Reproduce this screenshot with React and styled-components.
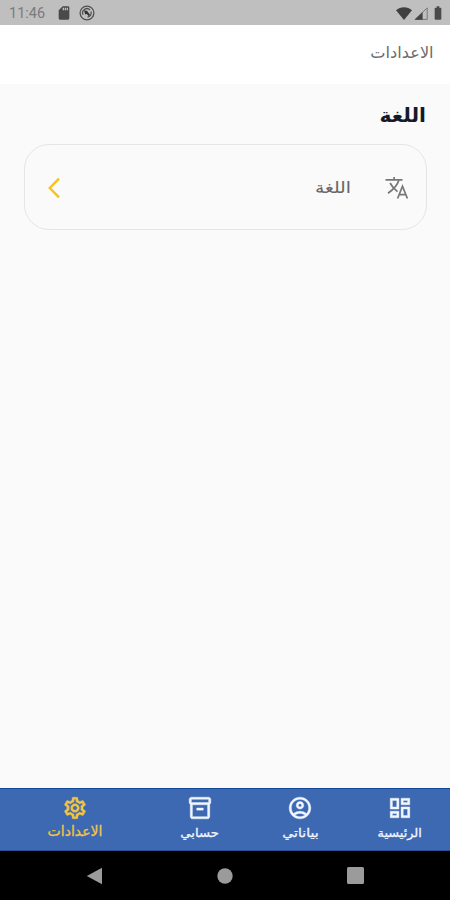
import styled, { createGlobalStyle } from "styled-components";
import {
  MdBatteryFull,
  MdOutlineAccountCircle,
  MdOutlineDashboard,
  MdOutlineInventory2,
  MdOutlineSettings,
  MdSdCard,
} from "react-icons/md";

const GlobalStyle = createGlobalStyle`
  * {
    box-sizing: border-box;
  }

  body {
    margin: 0;
    background: #fafafa;
    font-family: "DejaVu Sans", sans-serif;
  }
`;

const Screen = styled.div`
  display: flex;
  flex-direction: column;
  width: 450px;
  height: 900px;
  overflow: hidden;
  background: #fafafa;
`;

const StatusBar = styled.div`
  display: flex;
  align-items: center;
  flex: none;
  height: 25px;
  padding: 1px 4px 0 9px;
  background: #bfbfbf;
  color: #4a4a4a;
`;

const Clock = styled.span`
  width: 47px;
  padding-top: 2px;
  color: #7b7b7b;
  font-family: Roboto, sans-serif;
  font-size: 14.5px;
  line-height: 22px;
`;

const StatusIcons = styled.div`
  display: flex;
  align-items: center;
  gap: ${(props) => props.$gap};
  margin-left: ${(props) => (props.$end ? "auto" : 0)};
`;

const Header = styled.header`
  display: flex;
  flex: none;
  height: 59px;
  padding: 16px 16px 0;
  background: #fff;
`;

const Label = styled.span`
  display: block;
  color: ${(props) => props.$color};
  font-size: ${(props) => props.$size}px;
  font-weight: ${(props) => props.$weight || 400};
  line-height: 24px;
  white-space: nowrap;
  transform: scaleX(${(props) => props.$stretch || 1});
  transform-origin: ${(props) => props.$origin || "right"};
  -webkit-text-stroke: ${(props) => props.$stroke || 0}px currentColor;
`;

const Content = styled.main`
  flex: 1;
  padding: 19px 23px 0 24px;
`;

const SectionTitle = styled.h2`
  display: flex;
  height: 24px;
  margin: 0 1px 17px;
`;

const Card = styled.div`
  display: flex;
  align-items: center;
  height: 86px;
  padding: 2px 17px 0 22px;
  border: 1px solid #e5e5e5;
  border-radius: 25px;
`;

const CardText = styled.div`
  display: flex;
  flex: 1;
  margin-right: 34px;
`;

const BottomNav = styled.nav`
  display: flex;
  flex: none;
  height: 63px;
  border-top: 1px solid #12479c;
  border-bottom: 1px solid #2c5292;
  background: #3d68b2;
`;

const NavItem = styled.div`
  display: flex;
  flex-direction: column;
  align-items: center;
  width: ${(props) => (props.$active ? 150 : 100)}px;
  padding-top: 6px;
  color: ${(props) => (props.$active ? "#f0c544" : "#f2f6fd")};

  > svg {
    flex: none;
    margin-bottom: ${(props) => (props.$active ? -2 : 0)}px;
  }

  /* the first path of each icon is an empty bounding box */
  > svg path:not([fill="none"]) {
    stroke: currentColor;
    stroke-width: 0.4px;
  }
`;

const SystemBar = styled.div`
  display: flex;
  align-items: center;
  justify-content: space-between;
  flex: none;
  height: 49px;
  padding: 0 86px;
  background: #000;
`;

const navItems = [
  { label: "الرئيسية", Icon: MdOutlineDashboard, size: 12, stretch: 1.07 },
  { label: "بياناتي", Icon: MdOutlineAccountCircle, size: 12, stretch: 1.17 },
  { label: "حسابي", Icon: MdOutlineInventory2, size: 12, stretch: 1.1 },
  {
    label: "الاعدادات",
    Icon: MdOutlineSettings,
    size: 14,
    stretch: 1,
    active: true,
  },
];

const SyncIcon = () => (
  <svg width="16" height="16" viewBox="0 0 16 16" fill="none">
    <circle cx="8" cy="8" r="6.9" stroke="#505050" strokeWidth="1.3" />
    <path
      d="M4 9.8A4.3 4.3 0 0 1 11 5M12 6.5A4.3 4.3 0 0 1 8.5 12.2"
      stroke="#505050"
      strokeWidth="1.3"
    />
    <path d="M5 5.5l3 .3 3 4-1.2 1.4-2-2.2-1.6.6z" fill="#333" />
  </svg>
);

const WifiIcon = () => (
  <svg width="16" height="13" viewBox="0 0 16 13">
    <path d="M0 3.2C4.5-.9 11.5-.9 16 3.2L8 13z" fill="#404040" />
  </svg>
);

const SignalIcon = () => (
  <svg width="14" height="13" viewBox="0 0 14 13">
    <path d="M1.2 12.4L13.2.9v11.5z" fill="none" stroke="#777" />
    <path d="M.5 12.8L8.6 5v7.8z" fill="#444" />
  </svg>
);

const TranslateIcon = () => (
  <svg
    width="24"
    height="24"
    viewBox="0 0 24 24"
    fill="none"
    stroke="#777"
    strokeWidth="1.7"
  >
    <path d="M.5 3.8h17M9.1 1v2.8M14 3.8C12.6 9 8.5 13.5 3 17.2M5.1 7c2 4 4.6 6.5 7.4 8.7" />
    <path d="M12.6 22.5L17.5 10.2l4.9 12.3M14.2 18.6h6.6" />
  </svg>
);

const Chevron = () => (
  <svg width="14" height="22" viewBox="0 0 14 22" fill="none">
    <path d="M12 1.7L2.8 11l9.2 9.3" stroke="#f6c21c" strokeWidth="2.4" />
  </svg>
);

export default function App() {
  return (
    <Screen>
      <GlobalStyle />
      <StatusBar>
        <Clock>11:46</Clock>
        <StatusIcons $gap="7px">
          <MdSdCard size={16} />
          <SyncIcon />
        </StatusIcons>
        <StatusIcons $gap="2px" $end>
          <WifiIcon />
          <SignalIcon />
          <MdBatteryFull size={16} />
        </StatusIcons>
      </StatusBar>

      <Header dir="rtl">
        <Label $color="#6c6c6c" $size={16} $stretch={1.01}>
          الاعدادات
        </Label>
      </Header>

      <Content dir="rtl">
        <SectionTitle>
          <Label $color="#151a2b" $size={20} $weight={700} $stretch={1.01}>
            اللغة
          </Label>
        </SectionTitle>
        <Card>
          <TranslateIcon />
          <CardText>
            <Label $color="#666" $size={16} $stretch={1.16} $stroke={0.1}>
              اللغة
            </Label>
          </CardText>
          <Chevron />
        </Card>
      </Content>

      <BottomNav dir="rtl">
        {navItems.map(({ label, Icon, size, stretch, active }) => (
          <NavItem key={label} $active={active}>
            <Icon size={26} />
            <Label
              $color="inherit"
              $size={size}
              $stretch={stretch}
              $stroke={0.3}
              $origin="center"
            >
              {label}
            </Label>
          </NavItem>
        ))}
      </BottomNav>

      <SystemBar>
        <svg width="17" height="18" viewBox="0 0 17 18">
          <path d="M16 .8v16.4L.8 9z" fill="#9b9b9b" />
        </svg>
        <svg width="16" height="16" viewBox="0 0 16 16">
          <circle cx="8" cy="8" r="7.7" fill="#9b9b9b" />
        </svg>
        <svg width="17" height="17" viewBox="0 0 17 17">
          <rect width="17" height="17" rx="1.5" fill="#9b9b9b" />
        </svg>
      </SystemBar>
    </Screen>
  );
}
